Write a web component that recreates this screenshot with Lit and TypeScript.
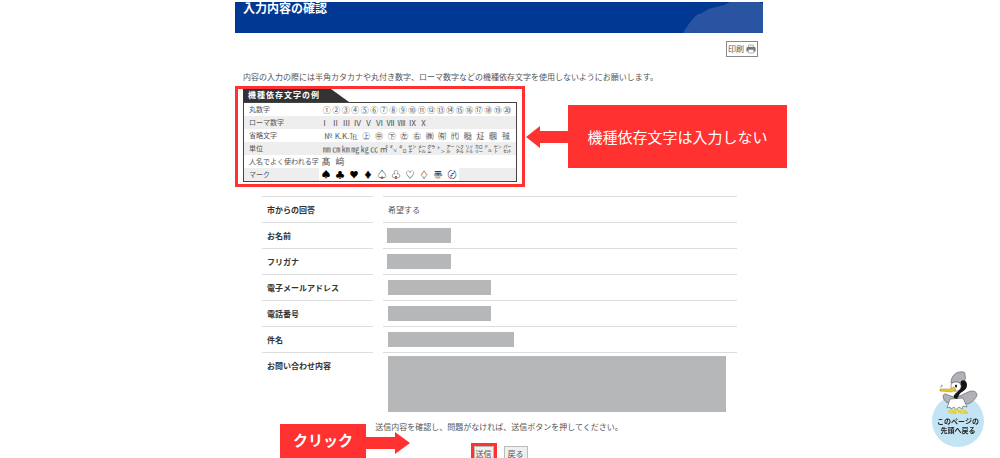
import { LitElement, html, svg, css } from "lit";
import { customElement } from "lit/decorators.js";

interface GlyphRow {
  label: string;
  kind: string;
  glyphs: string[];
}

interface Field {
  label: string;
  text?: string;
  mask?: string;
}

const GLYPH_ROWS: GlyphRow[] = [
  { label: "丸数字", kind: "n20", glyphs: [..."①②③④⑤⑥⑦⑧⑨⑩⑪⑫⑬⑭⑮⑯⑰⑱⑲⑳"] },
  { label: "ローマ数字", kind: "roman", glyphs: [..."ⅠⅡⅢⅣⅤⅥⅦⅧⅨⅩ"] },
  { label: "省略文字", kind: "n15", glyphs: ["№", "K.K.", ..."℡㊤㊥㊦㊧㊨㈱㈲㈹㍾㍽㍼㍻"] },
  { label: "単位", kind: "n20", glyphs: [..."㎜㎝㎞㎎㎏㏄㎡㍉㌔㌢㍍㌘㌧㌃㌶㍑㌍㌦㌣㌫"] },
  { label: "人名でよく使われる字", kind: "names", glyphs: [..."髙﨑"] },
  { label: "マーク", kind: "marks", glyphs: [..."♠♣♥♦♤♧♡♢〠〄"] },
];

const FIELDS: Field[] = [
  { label: "市からの回答", text: "希望する" },
  { label: "お名前", mask: "name" },
  { label: "フリガナ", mask: "name" },
  { label: "電子メールアドレス", mask: "mid" },
  { label: "電話番号", mask: "mid" },
  { label: "件名", mask: "subject" },
  { label: "お問い合わせ内容", mask: "body" },
];

@customElement("glyph-table")
export class GlyphTable extends LitElement {
  static styles = css`
    :host {
      display: block;
    }
    .tab {
      display: block;
      width: 106px;
      box-sizing: border-box;
      height: 13px;
      padding-left: 5px;
      background: #333;
      clip-path: polygon(0 0, 88px 0, 100% 100%, 0 100%);
      color: #fff;
      font-size: 8px;
      line-height: 12px;
      font-weight: 700;
      letter-spacing: 1px;
    }
    table {
      width: 100%;
      border: 1px solid #444;
      border-collapse: separate;
      border-spacing: 0;
      box-sizing: border-box;
      color: #555;
      font-size: 7px;
      line-height: 13px;
    }
    tr:nth-child(even) {
      background: #eee;
    }
    th,
    td {
      padding: 0;
      height: 13px;
      font-weight: 400;
      text-align: left;
      white-space: nowrap;
    }
    th {
      width: 73px;
      padding-left: 5px;
    }
    td {
      padding-right: 4px;
      font-size: 8px;
    }
    .set {
      display: grid;
      text-align: center;
      height: 13px;
    }
    .n20 {
      grid-template-columns: repeat(20, minmax(0, 1fr));
    }
    .n15 {
      grid-template-columns: repeat(15, minmax(0, 1fr));
    }
    .roman {
      grid-template-columns: repeat(10, 11px);
      margin-left: -3px;
    }
    .names {
      grid-template-columns: repeat(2, 14px);
      margin-left: -3px;
      font-size: 9px;
    }
    .marks {
      grid-template-columns: repeat(10, 14px);
      width: 140px;
      margin-left: -3px;
      background: #fff;
      color: #000;
      font-size: 9px;
    }
  `;

  render() {
    return html`
      <span class="tab">機種依存文字の例</span>
      <table>
        ${GLYPH_ROWS.map(
          (r) => html`<tr>
            <th scope="row">${r.label}</th>
            <td><div class="set ${r.kind}">${r.glyphs.map((g) => html`<span>${g}</span>`)}</div></td>
          </tr>`
        )}
      </table>
    `;
  }
}

@customElement("app-root")
export class AppRoot extends LitElement {
  static styles = css`
    :host {
      display: block;
      height: 100vh;
      overflow: hidden;
      box-sizing: border-box;
      padding: 2px 2px 0 0;
      background: #fff;
      color: #555;
      font-family: "Noto Sans CJK JP", sans-serif;
      font-size: 8px;
      line-height: 12px;
    }
    .page {
      position: relative;
      width: 528px;
      max-width: 100%;
      margin: 0 auto;
    }
    .banner {
      display: flex;
      justify-content: space-between;
      height: 31px;
      overflow: hidden;
      background: #003893;
    }
    .banner h1 {
      margin: -2px 0 0 8px;
      color: #fff;
      font-size: 12px;
      line-height: 16px;
      font-weight: 700;
    }
    .tools {
      display: flex;
      justify-content: flex-end;
      padding: 8px 5px 0 0;
    }
    button {
      font: inherit;
      color: inherit;
      margin: 0;
      border-radius: 0;
    }
    .print {
      display: flex;
      align-items: center;
      gap: 2px;
      height: 16px;
      padding: 0 1px;
      border: 1px solid #888;
      background: #fff;
    }
    .intro {
      margin: 14px 8px 3px;
    }
    .example {
      display: flex;
      align-items: center;
    }
    .example > * {
      flex: none;
    }
    .frame {
      width: 290px;
      box-sizing: border-box;
      border: 3px solid #ff3131;
      padding: 0 5px 2px;
    }
    .callout {
      background: #ff3131;
      color: #fff;
      text-align: center;
    }
    .note {
      width: 219px;
      font-size: 15px;
      line-height: 63px;
    }
    .fields {
      width: 495px;
      margin: 9px 0 0 17px;
      border-spacing: 10px 0;
      border-collapse: separate;
    }
    .fields th,
    .fields td {
      border-top: 1px solid #ddd;
      height: 25px;
      padding: 0 5px;
      text-align: left;
    }
    .fields th {
      width: 101px;
      color: #333;
      font-weight: 700;
    }
    .fields tr:last-child > * {
      height: 61px;
      vertical-align: top;
    }
    .fields tr:last-child th {
      padding-top: 7px;
    }
    .fields tr:last-child td {
      padding-top: 3px;
    }
    .mask {
      display: block;
      height: 15px;
      background: #b6b7b8;
    }
    .name {
      width: 64px;
      margin-left: -1px;
    }
    .mid {
      width: 103px;
    }
    .subject {
      width: 126px;
    }
    .body {
      height: 56px;
      width: 338px;
    }
    .send {
      position: relative;
      text-align: center;
    }
    .send p {
      margin: 0;
    }
    .click {
      position: absolute;
      left: 45px;
      top: 3px;
      display: flex;
      align-items: flex-start;
    }
    .click .callout {
      width: 86px;
      height: 40px;
      font-size: 15px;
      line-height: 32px;
      font-weight: 700;
    }
    .click svg {
      margin-top: 8px;
    }
    .buttons {
      display: flex;
      justify-content: center;
      align-items: center;
      gap: 7px;
      padding-top: 10px;
    }
    .ring {
      border: 3px solid #ff3131;
      display: flex;
    }
    .buttons button {
      height: 16px;
      padding: 0 3px;
      border: 1px solid #bbb;
      background: #efefef;
    }
    .ring button {
      padding: 0 1px;
    }
    .totop {
      position: fixed;
      right: 16px;
      bottom: 11px;
      width: 52px;
      color: #222;
      font-size: 7px;
      line-height: 9px;
      font-weight: 700;
      text-align: center;
      text-decoration: none;
    }
    .totop svg,
    .banner svg,
    .example svg,
    .click svg {
      display: block;
    }
    .totop span {
      position: absolute;
      left: 0;
      right: 0;
      bottom: 12px;
    }
  `;

  private bird() {
    return svg`
      <circle cx="26" cy="50" r="26" fill="#c3e4f5"/>
      <g stroke="#555" stroke-width=".6" stroke-linejoin="round">
        <path d="M16 24c-3-2-5-1-5 2 1 4 4 6 8 7l14 0c5 1 11-5 12-9 0-4-5-5-9-3l-8 4-6 1z" fill="#b0b2b8"/>
        <path d="M18 28l-3 9 3-1 1 2 3-2 2 3 3-3 3 2 1-3 4 1-4-9z" fill="#fff"/>
        <path d="M19 12c0-7 5-12 12-11 2 0 2 1 2 3 1 2 0 5-1 8z" fill="#b0b2b8"/>
      </g>
      <path d="M29 10c4-2 6 1 6 4 0 6-6 6-8 10l-2 4-3-1c-1-4 3-5 5-8l1-4z" fill="#151515"/>
      <path d="M20 12c3-2 8-1 9 2 1 4-3 7-7 6-3-1-4-5-2-8z" fill="#fff" stroke="#333" stroke-width=".5"/>
      <ellipse cx="24" cy="15" rx="1" ry="1.6" fill="#111"/>
      <path d="M22 16l-4 2-10 0v2l11 1 5-2z" fill="#efc928" stroke="#856b12" stroke-width=".4"/>
      <path d="M9 14l2 1M8 16l2-.5" stroke="#777" stroke-width=".7"/>
      <path d="M16 41l4-2 2 2 3-3 2 3 4-2 5 3M18 42h7m3 0h8" fill="none" stroke="#e3cf28" stroke-width="1.5"/>
    `;
  }

  render() {
    return html`
      <main class="page">
        <header class="banner">
          <h1>入力内容の確認</h1>
          <svg width="80" height="31" viewBox="0 0 80 31" aria-hidden="true">
            <path d="M0 31C4 24 9 17 15 12C20 12 23 7 29 6L41 3L47 0H76L80 2V31Z" fill="#2854a2" />
          </svg>
        </header>
        <div class="tools">
          <button class="print" type="button">
            印刷
            <svg width="10" height="10" viewBox="0 0 10 10" aria-hidden="true">
              <path d="M2.5 3V1h5v2" fill="#eee" stroke="#999" stroke-width=".7" />
              <path d="M1.5 3h7Q9.600 3 9.600 4v3.500H.4V4Q.4 3 1.500 3z" fill="#777" />
              <path d="M2.300 5.500h5.400V9H2.300z" fill="#fff" stroke="#888" stroke-width=".6" />
            </svg>
          </button>
        </div>
        <p class="intro">
          内容の入力の際には半角カタカナや丸付き数字、ローマ数字などの機種依存文字を使用しないようにお願いします。
        </p>
        <section class="example">
          <div class="frame"><glyph-table></glyph-table></div>
          <svg width="43" height="22" viewBox="0 0 43 22" aria-hidden="true">
            <path d="M1 11L15 0V5H43V17H15V22Z" fill="#ff3131" />
          </svg>
          <div class="callout note">機種依存文字は入力しない</div>
        </section>
        <table class="fields">
          ${FIELDS.map(
            (f) => html`<tr>
              <th scope="row">${f.label}</th>
              <td>${f.text ?? html`<span class="mask ${f.mask}"></span>`}</td>
            </tr>`
          )}
        </table>
        <section class="send">
          <p>送信内容を確認し、問題がなければ、送信ボタンを押してください。</p>
          <div class="buttons">
            <span class="ring"><button type="submit">送信</button></span>
            <button type="button">戻る</button>
          </div>
          <div class="click">
            <div class="callout">クリック</div>
            <svg width="44" height="22" viewBox="0 0 44 22" aria-hidden="true">
              <path d="M44 11L29 0V5H0V17H29V22Z" fill="#ff3131" />
            </svg>
          </div>
        </section>
      </main>
      <a class="totop" href="#">
        <svg width="52" height="76" viewBox="0 0 52 76" aria-hidden="true">${this.bird()}</svg>
        <span>このページの<br />先頭へ戻る</span>
      </a>
    `;
  }
}
